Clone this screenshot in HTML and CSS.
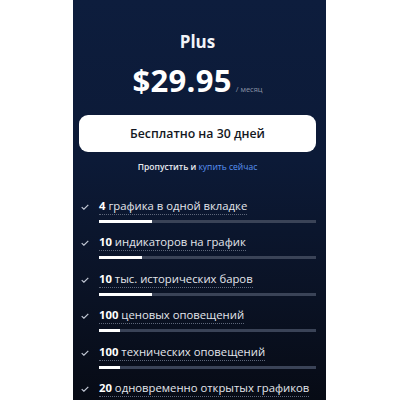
FILE: index.html
```html
<!DOCTYPE html>
<html>
<head>
<meta charset="utf-8">
<link rel="stylesheet" href="styles.css">
</head>
<body>
<div class="card">
  <div class="title">Plus</div>
  <div class="price"><span class="amount">$29.95</span><span class="per">/ месяц</span></div>
  <button class="cta">Бесплатно на 30 дней</button>
  <div class="skip">Пропустить и <span class="link">купить сейчас</span></div>
  <ul class="features">
    <li class="feature">
      <svg class="check" width="8" height="6" viewBox="0 0 8 6"><path d="M0.7 3.1 L2.9 5.2 L7.3 0.8" fill="none" stroke="#c3c9d6" stroke-width="1.2"/></svg>
      <div class="body">
        <span class="label"><b>4</b> графика в одной вкладке</span>
        <div class="track"><div class="fill" style="width:53px"></div></div>
      </div>
    </li>
    <li class="feature">
      <svg class="check" width="8" height="6" viewBox="0 0 8 6"><path d="M0.7 3.1 L2.9 5.2 L7.3 0.8" fill="none" stroke="#c3c9d6" stroke-width="1.2"/></svg>
      <div class="body">
        <span class="label"><b>10</b> индикаторов на график</span>
        <div class="track"><div class="fill" style="width:43px"></div></div>
      </div>
    </li>
    <li class="feature">
      <svg class="check" width="8" height="6" viewBox="0 0 8 6"><path d="M0.7 3.1 L2.9 5.2 L7.3 0.8" fill="none" stroke="#c3c9d6" stroke-width="1.2"/></svg>
      <div class="body">
        <span class="label"><b>10</b> тыс. исторических баров</span>
        <div class="track"><div class="fill" style="width:53px"></div></div>
      </div>
    </li>
    <li class="feature">
      <svg class="check" width="8" height="6" viewBox="0 0 8 6"><path d="M0.7 3.1 L2.9 5.2 L7.3 0.8" fill="none" stroke="#c3c9d6" stroke-width="1.2"/></svg>
      <div class="body">
        <span class="label"><b>100</b> ценовых оповещений</span>
        <div class="track"><div class="fill" style="width:21px"></div></div>
      </div>
    </li>
    <li class="feature">
      <svg class="check" width="8" height="6" viewBox="0 0 8 6"><path d="M0.7 3.1 L2.9 5.2 L7.3 0.8" fill="none" stroke="#c3c9d6" stroke-width="1.2"/></svg>
      <div class="body">
        <span class="label"><b>100</b> технических оповещений</span>
        <div class="track"><div class="fill" style="width:21px"></div></div>
      </div>
    </li>
    <li class="feature">
      <svg class="check" width="8" height="6" viewBox="0 0 8 6"><path d="M0.7 3.1 L2.9 5.2 L7.3 0.8" fill="none" stroke="#c3c9d6" stroke-width="1.2"/></svg>
      <div class="body">
        <span class="label"><b>20</b> одновременно открытых графиков</span>
        <div class="track"><div class="fill" style="width:53px"></div></div>
      </div>
    </li>
  </ul>
</div>
</body>
</html>
```

FILE: styles.css
```css
* { box-sizing: border-box; }
html, body {
  margin: 0;
  padding: 0;
  background: #ffffff;
  height: 400px;
  overflow: hidden;
}
body {
  font-family: "Open Sans", "DejaVu Sans", sans-serif;
}
.card {
  margin-left: 73px;
  width: 253px;
  height: 400px;
  padding: 0 10px 0 6px;
  background: linear-gradient(180deg, #0d1d3d 0%, #0c1a37 40%, #0a1224 75%, #070b15 100%);
  display: flex;
  flex-direction: column;
  align-items: stretch;
  color: #ffffff;
  overflow: hidden;
}
.card > * { flex-shrink: 0; }
.title {
  margin-top: 31px;
  text-align: center;
  font-size: 17px;
  font-weight: 700;
  line-height: 22px;
  color: #f2f4f8;
}
.price {
  margin-top: 8px;
  display: flex;
  justify-content: center;
  align-items: baseline;
  height: 38px;
}
.amount {
  font-size: 31px;
  font-weight: 700;
  line-height: 38px;
  letter-spacing: 0.3px;
  color: #ffffff;
}
.per {
  margin-left: 4px;
  font-size: 7.5px;
  color: #8b93a6;
}
.cta {
  margin-top: 16px;
  height: 37px;
  border: none;
  border-radius: 9px;
  background: #ffffff;
  color: #131722;
  font-family: "Open Sans", "DejaVu Sans", sans-serif;
  font-size: 12.3px;
  font-weight: 600;
  padding: 0;
}
.skip {
  margin-top: 8px;
  text-align: center;
  font-size: 8.5px;
  font-weight: 600;
  line-height: 14px;
  color: #e8ebf1;
}
.link {
  color: #5a94f5;
  font-weight: 400;
}
.features {
  list-style: none;
  margin: 23px 0 0 0;
  padding: 0;
  display: flex;
  flex-direction: column;
  gap: 10.4px;
}
.feature {
  display: flex;
  align-items: flex-start;
  flex-shrink: 0;
}
.check {
  flex: none;
  margin: 7px 10px 0 2px;
}
.body {
  flex: 1;
  display: flex;
  flex-direction: column;
  align-items: flex-start;
}
.label {
  font-size: 11.3px;
  line-height: 17px;
  white-space: nowrap;
  color: #e3e6ec;
  border-bottom: 1px dotted #5d6679;
}
.label b {
  font-weight: 700;
  color: #ffffff;
}
.track {
  margin-top: 5px;
  width: 100%;
  height: 3px;
  background: #3a4357;
}
.fill {
  height: 3px;
  background: #ffffff;
}
```
